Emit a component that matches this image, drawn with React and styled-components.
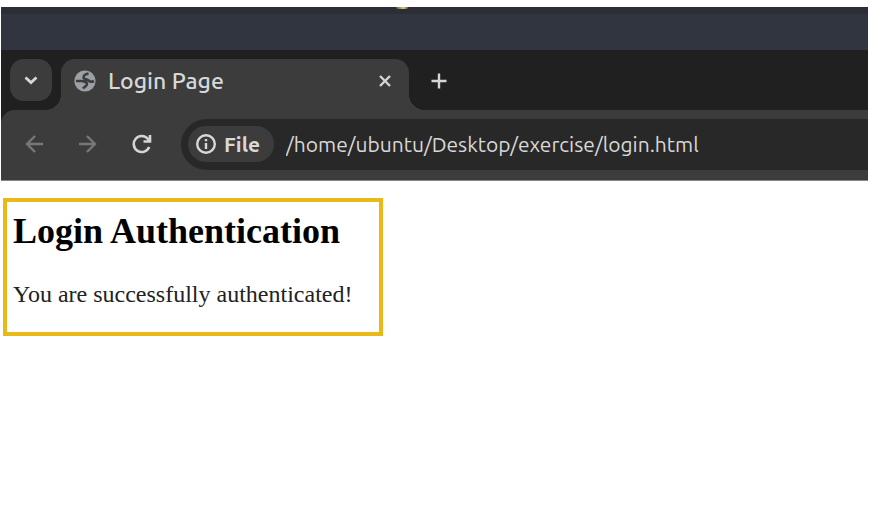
import React from "react";
import styled, { createGlobalStyle } from "styled-components";

const GlobalStyle = createGlobalStyle`
  *, *::before, *::after { box-sizing: border-box; }
  body { margin: 0; background: #fff; }
  button, input { font: inherit; color: inherit; border: 0; padding: 0; background: none; }
`;

const Screen = styled.div`
  padding: 7px 6px 0 1px;
  min-height: 100vh;
`;

const Browser = styled.div`
  background: #202020;
  color: #d8d8d8;
  font-family: Ubuntu, "Noto Sans", sans-serif;
  font-size: 21px;
  line-height: 28px;
`;

const DesktopBar = styled.div`
  display: flex;
  height: 43px;
  padding-left: 395px;
  background: #31353f;
  border-top: 7px solid #2c2d36;
`;

const DockHint = styled.span`
  width: 12px;
  height: 2px;
  margin-top: -7px;
  border-radius: 0 0 6px 6px;
  background: linear-gradient(90deg, #45664a, #d5ca78 60%, #776936);
`;

const TabStrip = styled.div`
  display: flex;
  height: 60px;
  padding: 9px 0 0 9px;
`;

const TabSearch = styled.button`
  display: grid;
  place-items: center;
  width: 42px;
  height: 42px;
  margin-right: 9px;
  border-radius: 14px;
  background: #3c3c3c;
`;

const Tab = styled.div`
  position: relative;
  display: flex;
  align-items: center;
  width: 348px;
  padding: 0 14px 8px 13px;
  border-radius: 14px 14px 0 0;
  background: #3c3c3c;

  &::before, &::after {
    content: "";
    position: absolute;
    bottom: 0;
    width: 16px;
    height: 16px;
  }
  &::before {
    right: 100%;
    background: radial-gradient(circle at 0 0, transparent 16px, #3c3c3c 16px);
  }
  &::after {
    left: 100%;
    background: radial-gradient(circle at 100% 0, transparent 16px, #3c3c3c 16px);
  }
`;

const TabTitle = styled.span`
  flex: 1;
  margin-left: 12px;
  font-size: 23px;
  font-weight: 500;
`;

const IconButton = styled.button`
  display: grid;
  place-items: center;
  width: 20px;
  height: 28px;
  color: ${(p) => (p.$dim ? "#777" : "#d5d5d5")};
`;

const NewTab = styled(IconButton)`
  margin: 8px 0 0 20px;
`;

const Toolbar = styled.div`
  display: flex;
  align-items: center;
  height: 71px;
  padding: 0 0 2px 23px;
  border-bottom: 1px solid #868686;
  border-top-left-radius: 14px;
  background: #3c3c3c;
`;

const Navigation = styled.nav`
  display: flex;
  gap: 34px;
  margin-right: 29px;
`;

const AddressBar = styled.div`
  display: flex;
  flex: 1;
  align-items: center;
  gap: 12px;
  height: 51px;
  padding-left: 7px;
  border-radius: 26px 0 0 26px;
  background: #282828;
`;

const FileChip = styled.button`
  display: flex;
  align-items: center;
  gap: 8px;
  width: 86px;
  height: 36px;
  padding-left: 8px;
  border-radius: 18px;
  background: #3c3c3c;
  font-weight: 700;
`;

const Address = styled.input`
  flex: 1;
  min-width: 0;
  height: 28px;
  outline: 0;
`;

const Page = styled.main`
  padding: 17px 0 0 2px;
  color: #000;
  font-family: "Liberation Serif", serif;
`;

const Message = styled.section`
  width: 380px;
  max-width: 100%;
  padding: 8px 6px 24px;
  border: 4px solid #e9b917;
`;

const Heading = styled.h2`
  margin: 0 0 28px;
  font-size: 36px;
  line-height: 42px;
`;

const Paragraph = styled.p`
  margin: 0;
  color: #222;
  font-size: 24px;
  line-height: 28px;
`;

function Icon({ stroke = 2.4, children }) {
  return (
    <svg width="20" height="20" viewBox="0 0 20 20" fill="none" stroke="currentColor" strokeWidth={stroke} aria-hidden="true">
      {children}
    </svg>
  );
}

function Globe() {
  return (
    <svg width="22" height="22" viewBox="0 0 22 22" aria-hidden="true">
      <circle cx="11" cy="11" r="10.6" fill="#9aa0a6" />
      <path
        fill="none"
        stroke="#3c3c3c"
        strokeWidth="2.6"
        d="M14.5 3.5C12 4 9.5 5.500 9.5 7.5S13 9 14.5 10.500S18 12 20 11M2 11h5c3 0 6 1 6 3s-3 3-4 4.500"
      />
    </svg>
  );
}

export default function App() {
  return (
    <Screen>
      <GlobalStyle />
      <Browser>
        <DesktopBar><DockHint /></DesktopBar>
        <TabStrip>
          <TabSearch aria-label="Search tabs">
            <Icon stroke={2.8}><path d="m4.5 7.5 5.5 5 5.5-5" /></Icon>
          </TabSearch>
          <Tab>
            <Globe />
            <TabTitle>Login Page</TabTitle>
            <IconButton aria-label="Close tab">
              <Icon><path d="m5 5 10 10m0-10-10 10" /></Icon>
            </IconButton>
          </Tab>
          <NewTab aria-label="New tab">
            <Icon><path d="M10 2.5v15M2.5 10h15" /></Icon>
          </NewTab>
        </TabStrip>
        <Toolbar>
          <Navigation>
            <IconButton $dim aria-label="Back">
              <Icon><path d="M19 10H3m8-8-8 8 8 8" /></Icon>
            </IconButton>
            <IconButton $dim aria-label="Forward">
              <Icon><path d="M1 10h16M9 2l8 8-8 8" /></Icon>
            </IconButton>
            <IconButton aria-label="Reload">
              <Icon stroke={2.6}><path d="M17.2 13a8 8 0 1 1-1.2-8l2 2M18 1v6.500h-6.500" /></Icon>
            </IconButton>
          </Navigation>
          <AddressBar>
            <FileChip>
              <Icon>
                <circle cx="10" cy="10" r="8.8" />
                <path d="M10 9v6M10 5v2.2" />
              </Icon>
              File
            </FileChip>
            <Address aria-label="Address" defaultValue="/home/ubuntu/Desktop/exercise/login.html" />
          </AddressBar>
        </Toolbar>
      </Browser>
      <Page>
        <Message>
          <Heading>Login Authentication</Heading>
          <Paragraph>You are successfully authenticated!</Paragraph>
        </Message>
      </Page>
    </Screen>
  );
}
